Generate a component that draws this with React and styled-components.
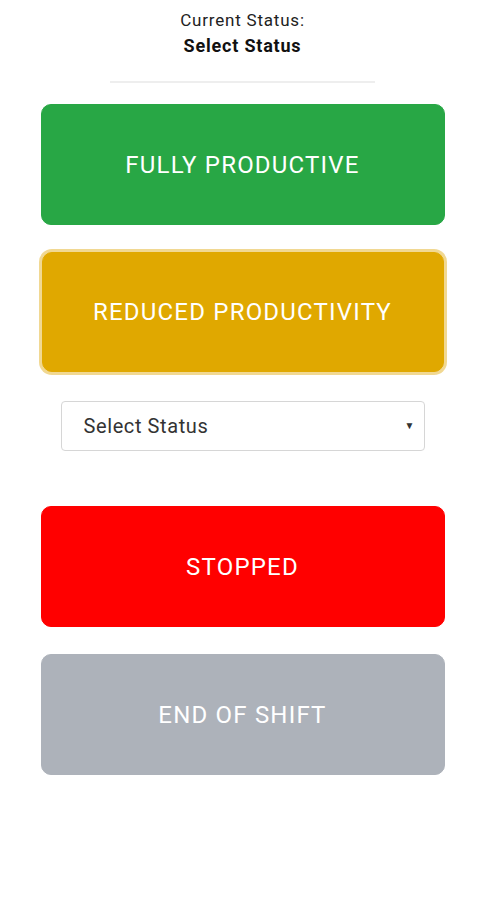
import styled, { createGlobalStyle } from 'styled-components';

const GlobalStyle = createGlobalStyle`
    body {
        margin: 0;
        background: #fff;
        font-family: Roboto, "Liberation Sans", sans-serif;
    }
`

const Page = styled.main`
    width: 485px;
    display: flex;
    flex-direction: column;
    align-items: center;
    padding-top: 10px;
`
const StatusLabel = styled.p`
    margin: 0;
    font-size: 17px;
    line-height: 20px;
    letter-spacing: 0.8px;
    color: #222;
`
const StatusValue = styled.p`
    margin: 6px 0 0;
    font-size: 18px;
    line-height: 20px;
    letter-spacing: 0.8px;
    font-weight: bold;
    color: #111;
`
const Divider = styled.hr`
    width: 265px;
    border: 0;
    border-top: 2px solid #eee;
    margin: 25px 0 21px;
`
const StatusButton = styled.button`
    width: 404px;
    height: 121px;
    border: 1px solid ${props => props.color};
    border-radius: 10px;
    background-color: ${props => props.color};
    color: #fff;
    font-family: Roboto, "Liberation Sans", sans-serif;
    font-size: 24px;
    letter-spacing: 1.2px;
    cursor: pointer;
    margin-bottom: 27px;
    box-shadow: ${props => props.active ? '0 0 0 3px rgba(236, 203, 110, 0.75)' : 'none'};
    ${props => props.active && 'height: 120px; width: 402px; margin-bottom: 29px;'}
`
const SelectWrap = styled.div`
    position: relative;
    width: 364px;
    height: 50px;
    margin: 0 0 55px;
`
const StatusSelect = styled.select`
    width: 100%;
    height: 100%;
    appearance: none;
    border: 1px solid #d6d6d6;
    border-radius: 4px;
    background: #fff;
    padding: 0 22px;
    font-family: Roboto, "Liberation Sans", sans-serif;
    font-size: 20px;
    letter-spacing: 0.6px;
    color: #333;
`
const Caret = styled.span`
    position: absolute;
    right: 10px;
    top: 19px;
    font-size: 10px;
    color: #333;
    pointer-events: none;
`

const App = () => {
    return(
        <>
            <GlobalStyle />
            <Page>
                <StatusLabel>Current Status:</StatusLabel>
                <StatusValue>Select Status</StatusValue>
                <Divider />
                <StatusButton color="#28a745">FULLY PRODUCTIVE</StatusButton>
                <StatusButton color="#e0a800" active>REDUCED PRODUCTIVITY</StatusButton>
                <SelectWrap>
                    <StatusSelect defaultValue="">
                        <option value="">Select Status</option>
                    </StatusSelect>
                    <Caret>▼</Caret>
                </SelectWrap>
                <StatusButton color="#ff0000">STOPPED</StatusButton>
                <StatusButton color="#adb2ba">END OF SHIFT</StatusButton>
            </Page>
        </>
    )
}

export default App;
